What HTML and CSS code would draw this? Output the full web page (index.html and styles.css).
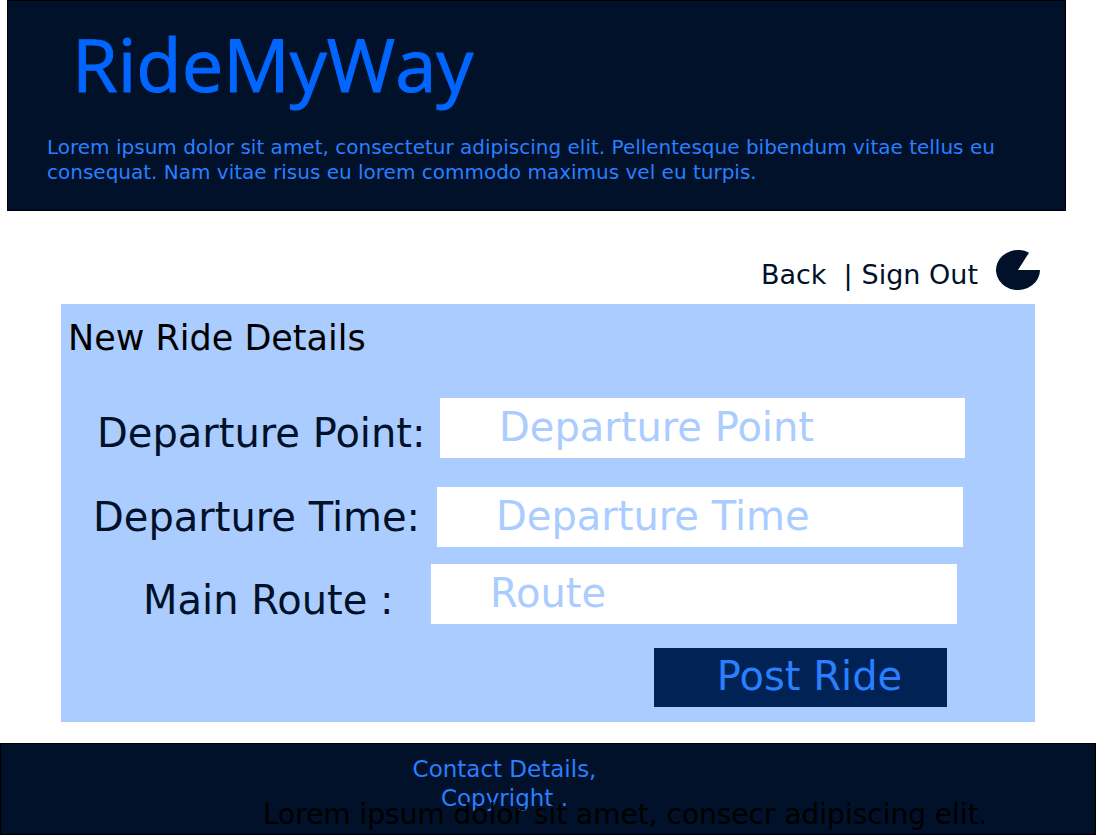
FILE: index.html
```html
<!DOCTYPE html>
<html lang="en">
<head>
<meta charset="utf-8">
<title>RideMyWay</title>
<link rel="stylesheet" href="styles.css">
</head>
<body>
<header class="site-header">
  <h1 class="brand">RideMyWay</h1>
  <p class="tagline">Lorem ipsum dolor sit amet, consectetur adipiscing elit. Pellentesque bibendum vitae tellus eu consequat. Nam vitae risus eu lorem commodo maximus vel eu turpis.</p>
</header>
<nav class="account">
  <a class="back" href="#">Back</a>
  <span class="divider">|</span>
  <a class="sign-out" href="#">Sign Out</a>
  <svg class="avatar" viewBox="0 0 44 40" width="44" height="40" aria-hidden="true"><path d="M22 20H44A22 20 0 1 1 33 2.68Z"/></svg>
</nav>
<main class="panel">
  <h2 class="panel-title">New Ride Details</h2>
  <form class="ride-form">
    <div class="row row-point">
      <label for="point">Departure Point:</label>
      <input id="point" type="text" placeholder="Departure Point">
    </div>
    <div class="row row-time">
      <label for="time">Departure Time:</label>
      <input id="time" type="text" placeholder="Departure Time">
    </div>
    <div class="row row-route">
      <label for="route">Main Route :</label>
      <input id="route" type="text" placeholder="Route">
    </div>
    <button class="submit" type="button">Post Ride</button>
  </form>
</main>
<footer class="site-footer">
  <p class="contact">Contact Details,<br>Copyright .</p>
  <p class="note">Lorem ipsum dolor sit amet, consecr adipiscing elit.</p>
</footer>
</body>
</html>
```
FILE: styles.css
```css
* { box-sizing: border-box; }
body {
  margin: 0;
  background: #fff;
  color: #001129;
  font-family: "DejaVu Sans", sans-serif;
}
h1, h2, p { margin: 0; font-weight: 400; }

.site-header {
  margin: 0 30px 0 7px;
  padding: 15px 36px 25px 39px;
  border: 1px solid #000;
  background: #001129;
}
.brand {
  padding-left: 25px;
  color: #06f;
  font-family: "Trebuchet MS", "Open Sans", sans-serif;
  font-size: 74px;
  line-height: 96px;
  -webkit-text-stroke: 1px #06f;
  margin-bottom: 23px;
}
.tagline {
  color: #2a7fff;
  font-size: 20px;
  line-height: 25px;
}

.account {
  display: flex;
  justify-content: flex-end;
  margin: 39px 56px 0 0;
  font-size: 27px;
  line-height: 50px;
}
.account a { color: inherit; text-decoration: none; }
.divider { margin: 0 9px 0 17px; }
.avatar { margin: 0 0 0 18px; fill: #001129; }

.panel {
  margin: 4px 61px 0;
  padding: 13px 0 15px;
  background: #aaccff;
}
.panel-title {
  padding-left: 7px;
  color: #000;
  font-size: 35px;
  line-height: 42px;
}
.ride-form {
  display: flex;
  flex-direction: column;
  margin-top: 39px;
  font-size: 40px;
}
.row { display: flex; align-items: center; }
.row label { flex: none; line-height: 46px; }
.row input {
  flex: 1;
  min-width: 0;
  height: 60px;
  padding: 0 0 2px 59px;
  border: 0;
  border-radius: 0;
  background: #fff;
  color: #001129;
  font: inherit;
}
.row input::placeholder { color: #aaccff; opacity: 1; }
.row-point { padding: 0 70px 0 36px; margin-bottom: 29px; }
.row-point label { width: 343px; padding-top: 10px; }
.row-time { padding: 0 72px 0 32px; margin-bottom: 17px; }
.row-time label { width: 344px; }
.row-route { padding: 0 78px 0 82px; margin-bottom: 24px; }
.row-route label { width: 288px; padding-top: 12px; }
.submit {
  align-self: flex-end;
  width: 293px;
  height: 59px;
  margin-right: 88px;
  padding: 0 0 3px 18px;
  border: 0;
  background: #002255;
  color: #2a7fff;
  font: inherit;
}

.site-footer {
  position: relative;
  margin-top: 21px;
  padding: 11px 87px 21px 0;
  border: 1px solid #000;
  background: #001129;
  text-align: center;
}
.contact {
  color: #2a7fff;
  font-size: 23px;
  line-height: 29px;
}
.note {
  position: absolute;
  left: 262px;
  bottom: 2px;
  color: #000;
  font-size: 28px;
  line-height: 34px;
  white-space: nowrap;
}
```
